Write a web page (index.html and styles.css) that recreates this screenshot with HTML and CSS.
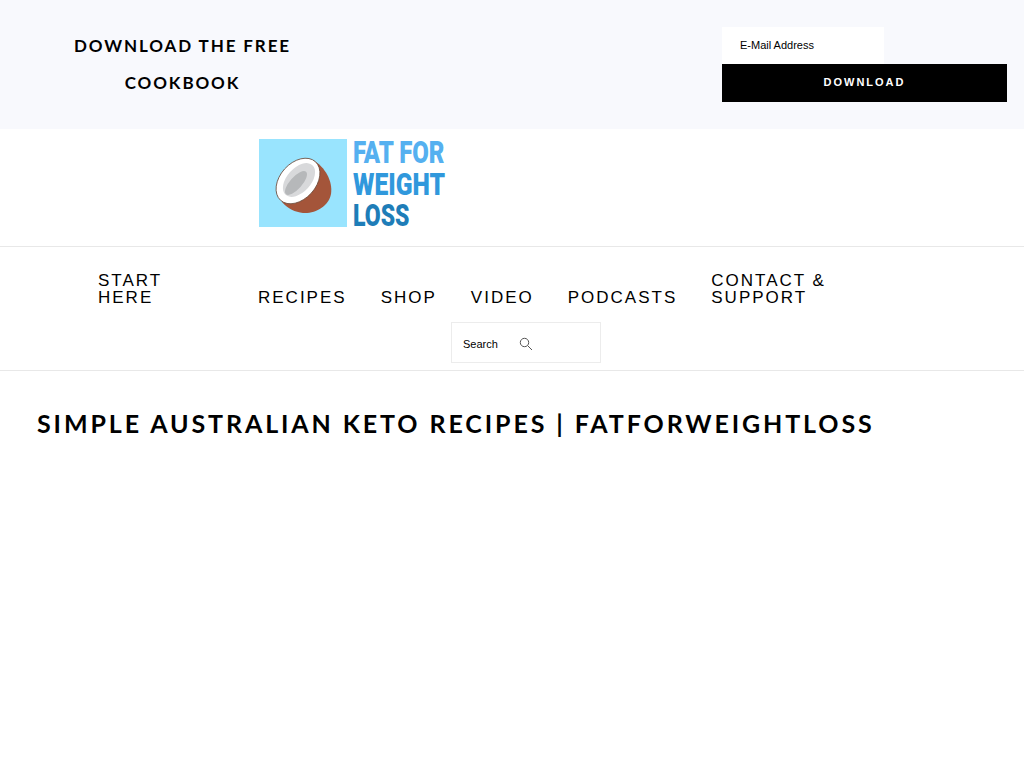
FILE: index.html
```html
<!DOCTYPE html>
<html lang="en">
<head>
  <meta charset="UTF-8">
  <meta name="viewport" content="width=device-width, initial-scale=1.0">
  <title>Simple Australian Keto Recipes | FatForWeightLoss</title>
  <link rel="stylesheet" href="styles.css">
</head>
<body>
  <section class="promo">
    <h3 class="promo-title">DOWNLOAD THE FREE<br>COOKBOOK</h3>
    <form class="promo-form">
      <div class="email-field">E-Mail Address</div>
      <div class="download-btn">DOWNLOAD</div>
    </form>
  </section>

  <header class="logo-row">
    <svg class="logo" width="188" height="104" viewBox="0 -6 188 104" role="img" aria-label="Fat For Weight Loss">
      <rect x="1" y="1" width="88" height="88" fill="#99e4fe"/>
      <!-- coconut shell -->
      <path d="M55 22 C67 29 75 43 73 56 C71 68 57 76 45 75 C37 74 30 71 24 64 Z" fill="#a4553a"/>
      <ellipse cx="40" cy="43" rx="18" ry="26" transform="rotate(42 40 43)" fill="#fff" stroke="#6b4a3a" stroke-width=".8"/>
      <ellipse cx="41" cy="42" rx="12" ry="20" transform="rotate(42 41 42)" fill="#d8d9db"/>
      <ellipse cx="38" cy="45" rx="6" ry="15" transform="rotate(42 38 45)" fill="#b6b8ba"/>
      <text class="logo-text" transform="translate(95 25) scale(.75 1)" fill="#55b0f0">FAT FOR</text>
      <text class="logo-text" transform="translate(95 57) scale(.77 1)" fill="#3098dc">WEIGHT</text>
      <text class="logo-text" transform="translate(95 88) scale(.72 1)" fill="#1e7db8">LOSS</text>
    </svg>
  </header>

  <nav class="main-nav">
    <div class="nav-links">
      <a class="nav-link nav-start">START HERE</a>
      <a class="nav-link">RECIPES</a>
      <a class="nav-link">SHOP</a>
      <a class="nav-link">VIDEO</a>
      <a class="nav-link">PODCASTS</a>
      <a class="nav-link nav-contact">CONTACT &amp; SUPPORT</a>
    </div>
    <div class="search-box">
      <span class="search-label">Search</span>
      <svg width="14" height="14" viewBox="0 0 14 14" fill="none" stroke="#555" stroke-width="1">
        <circle cx="5.5" cy="5.5" r="4.2"/>
        <path d="M8.6 8.6 L13 13"/>
      </svg>
    </div>
  </nav>

  <main class="content">
    <h1>SIMPLE AUSTRALIAN KETO RECIPES | FATFORWEIGHTLOSS</h1>
  </main>
</body>
</html>
```

FILE: styles.css
```css
body {
  margin: 0;
  background: #fff;
  color: #000;
  font-family: "Liberation Sans", Arial, sans-serif;
}

.promo {
  display: flex;
  justify-content: space-between;
  height: 129px;
  padding: 27px 17px 0 0;
  box-sizing: border-box;
  background: #f8f9fd;
}

.promo-title {
  width: 365px;
  margin: 0;
  font-family: Lato, sans-serif;
  font-size: 17px;
  font-weight: 700;
  line-height: 37px;
  letter-spacing: 1.9px;
  text-align: center;
}

.promo-form {
  width: 285px;
}

.email-field {
  width: 162px;
  height: 37px;
  padding-left: 18px;
  box-sizing: border-box;
  background: #fff;
  font-size: 11px;
  line-height: 37px;
}

.download-btn {
  height: 38px;
  background: #000;
  color: #fff;
  font-size: 11px;
  font-weight: 700;
  line-height: 37px;
  letter-spacing: 2px;
  text-align: center;
}

.logo-row {
  height: 118px;
  padding: 3px 0 0 258px;
  box-sizing: border-box;
  border-bottom: 1px solid #e8e8e8;
}

.logo {
  display: block;
}

.logo-text {
  font-family: "Roboto", sans-serif;
  font-size: 32px;
  font-weight: 900;
}

.main-nav {
  height: 124px;
  box-sizing: border-box;
  padding-top: 25px;
  border-bottom: 1px solid #e8e8e8;
}

.nav-links {
  display: flex;
  align-items: flex-end;
  gap: 34px;
  padding-left: 98px;
}

.nav-link {
  font-size: 17px;
  line-height: 17px;
  letter-spacing: 2px;
  white-space: nowrap;
}

.nav-start {
  width: 126px;
  padding-right: 40px;
  box-sizing: border-box;
  white-space: normal;
}

.nav-contact {
  width: 130px;
  white-space: normal;
}

.search-box {
  display: flex;
  align-items: center;
  gap: 21px;
  width: 150px;
  height: 41px;
  margin: 16px 0 0 451px;
  padding: 2px 0 0 11px;
  box-sizing: border-box;
  border: 1px solid #ececec;
  font-size: 11px;
}

.content {
  padding: 36px 37px 0;
}

.content h1 {
  margin: 0;
  font-family: Lato, sans-serif;
  font-size: 25px;
  font-weight: 700;
  line-height: 32px;
  letter-spacing: 2.9px;
}
```
